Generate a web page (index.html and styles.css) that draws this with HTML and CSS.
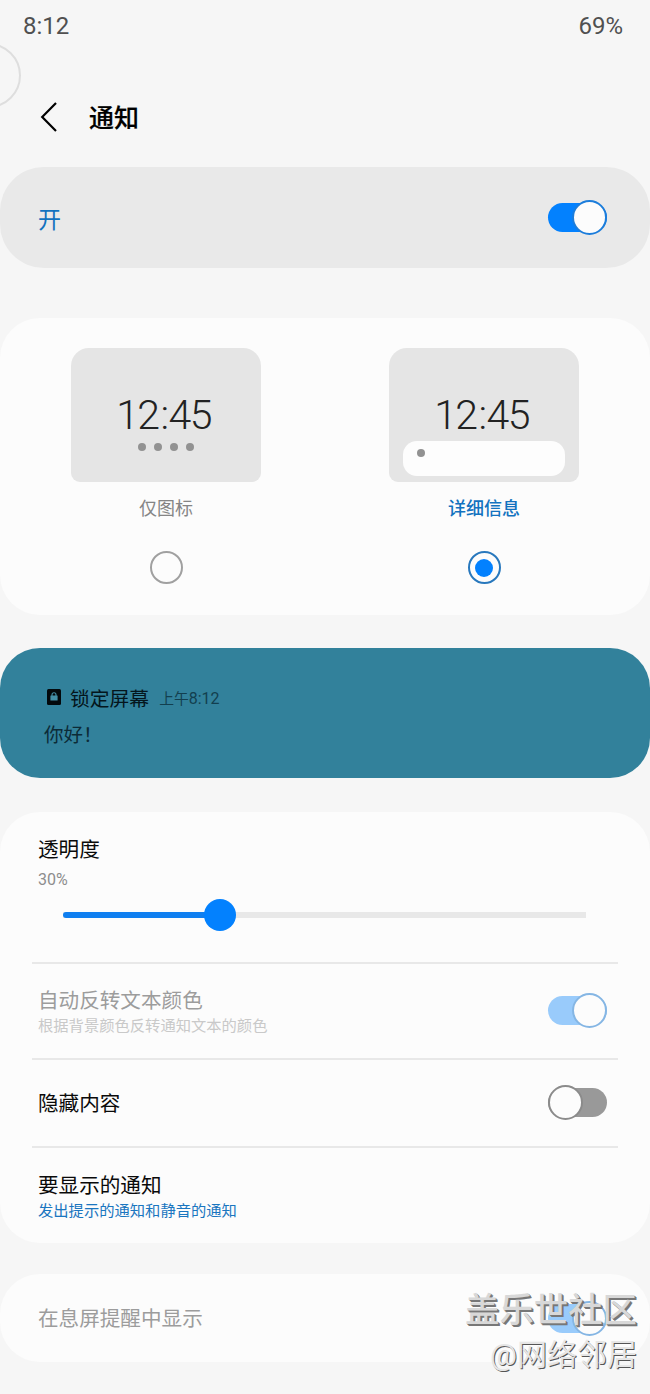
FILE: index.html
```html
<!DOCTYPE html>
<html lang="zh-CN">
<head>
  <meta charset="UTF-8" />
  <meta name="viewport" content="width=device-width, initial-scale=1.0"/>
  <title>通知</title>
  <link rel="stylesheet" href="styles.css">
</head>
<body>

  <div class="edge-handle"></div>

  <div class="status">
    <span>8:12</span>
    <span>69%</span>
  </div>

  <header>
    <svg class="back" width="18" height="32" viewBox="0 0 18 32" fill="none" stroke="#000" stroke-width="2.2">
      <path d="M16 2 L2.2 16 L16 30"/>
    </svg>
    <h1>通知</h1>
  </header>

  <main>
    <section class="card master">
      <span>开</span>
      <div class="switch on"></div>
    </section>

    <section class="card styles">
      <div class="option">
        <div class="thumb">
          <div class="clock">12<b>:</b>45</div>
          <div class="dots"><i></i><i></i><i></i><i></i></div>
        </div>
        <p>仅图标</p>
        <div class="radio"></div>
      </div>
      <div class="option selected">
        <div class="thumb">
          <div class="clock">12<b>:</b>45</div>
          <div class="bubble"><i></i></div>
        </div>
        <p>详细信息</p>
        <div class="radio"></div>
      </div>
    </section>

    <section class="card preview">
      <div class="preview-head">
        <svg width="14" height="16" viewBox="0 0 14 16">
          <rect width="14" height="16" rx="1.5" fill="#03090c"/>
          <rect x="3.4" y="6.6" width="7.2" height="5" rx="0.5" fill="#4390a8"/>
          <path d="M5 7.2 V5.8 a2 2 0 0 1 4 0 V7.2" fill="none" stroke="#4390a8" stroke-width="1.1"/>
        </svg>
        <span class="app">锁定屏幕</span>
        <span class="time">上午<span>8:12</span></span>
      </div>
      <p>你好！</p>
    </section>

    <section class="card settings">
      <div class="row opacity">
        <h2>透明度</h2>
        <p>30%</p>
        <div class="slider">
          <div class="fill" style="width:30%"></div>
          <div class="thumb-dot"></div>
        </div>
      </div>
      <div class="row invert disabled">
        <div>
          <h2>自动反转文本颜色</h2>
          <p>根据背景颜色反转通知文本的颜色</p>
        </div>
        <div class="switch on"></div>
      </div>
      <div class="row hide">
        <h2>隐藏内容</h2>
        <div class="switch"></div>
      </div>
      <div class="row show">
        <div>
          <h2>要显示的通知</h2>
          <p>发出提示的通知和静音的通知</p>
        </div>
      </div>
    </section>

    <section class="card aod disabled">
      <h2>在息屏提醒中显示</h2>
      <div class="switch on"></div>
    </section>
  </main>

  <div class="watermark">
    <strong>盖乐世社区</strong>
    <span>@网络邻居</span>
  </div>

</body>
</html>
```
FILE: styles.css
```css
*,*::after{margin:0;padding:0;box-sizing:border-box}
body{position:relative;height:1394px;overflow:hidden;font-family:Roboto,"Noto Sans CJK SC",sans-serif;background:#f6f6f6;color:#0a0a0a}
.edge-handle{position:absolute;left:-44px;top:43px;width:65px;height:65px;border:2px solid #dedede;border-radius:50%}
.status{display:flex;justify-content:space-between;height:52px;padding:0 27px 0 23px;line-height:52px;font-size:24px;color:#505050}
header{display:flex;align-items:center;height:115px;padding:15px 40px 0}
header h1{margin:4px 0 0 31px;font-size:25px;line-height:36px;font-weight:500;-webkit-text-stroke:0.2px #000;color:#000}
.card{background:#fcfcfc;border-radius:40px}
h2{font-size:20.6px;line-height:28px;font-weight:400}

.switch{position:relative;flex:none;width:59px;height:29px;border-radius:15px;background:#999}
.switch::after{content:"";position:absolute;left:0;top:-3px;width:35px;height:35px;border:2px solid #8b8b8b;border-radius:50%;background:#fcfcfc}
.switch.on{background:#0381fe}
.switch.on::after{left:auto;right:0;border-color:#1c7ddb}
.disabled .switch{background:#99cbfb}
.disabled .switch::after{border-color:#85b6e4}

.master{display:flex;align-items:center;justify-content:space-between;height:101px;margin-bottom:50px;padding:0 43px 0 38px;background:#e9e9e9;border-radius:44px;font-size:23px;color:#1272bf}

.styles{display:flex;justify-content:space-between;height:297px;margin-bottom:33px;padding:30px 71px 0}
.option{display:flex;flex-direction:column;align-items:center}
.thumb{display:flex;flex-direction:column;align-items:center;width:190px;height:134px;padding-top:42px;border-radius:18px 18px 9px 9px;background:#e5e5e5}
.clock{margin-right:5px;font-size:41px;line-height:50px;font-weight:300;letter-spacing:-1.6px;color:#222}
.clock b{margin:0 1px 0 2px;font-weight:300}
.thumb i{display:block;width:8px;height:8px;border-radius:50%;background:#929292}
.dots{display:flex;gap:8px;margin-top:3px}
.bubble{width:162px;height:35px;margin-top:1px;padding:8px 14px;border-radius:14px;background:#fdfdfd}
.option p{margin-top:14px;font-size:18px;line-height:26px;color:#858585}
.radio{width:33px;height:33px;margin-top:29px;border:2px solid #a0a0a0;border-radius:50%}
.selected p{font-weight:500;color:#1272bf}
.selected .radio{border-color:#2878bd;padding:5.5px}
.selected .radio::after{content:"";display:block;width:18px;height:18px;border-radius:50%;background:#0381fe}

.preview{height:130px;margin-bottom:34px;padding:34px 44px;background:#32819b;color:#0c2b37}
.preview-head{display:flex;align-items:center;height:30px;padding-left:3px}
.preview-head .app{margin-left:9px;font-size:19.8px;color:#04151c}
.preview-head .time{margin-left:10px;font-size:14.8px;color:#123f4f}
.preview-head .time span{font-size:16px}
.preview p{margin-top:10px;font-size:19.5px;line-height:28px}

.settings{height:431px;margin-bottom:31px;padding:0 32px}
.row{display:flex;align-items:center;justify-content:space-between;padding:0 11px 0 6px;border-bottom:2px solid #e8e8e8}
.row p{font-size:15.3px;line-height:22px}
.opacity{display:block;height:152px;padding-top:24px}
.row.opacity p{margin-top:5px;font-size:16px;color:#8d8d8d}
.slider{display:flex;align-items:center;width:523px;height:32px;margin:8px 0 0 25px;background:linear-gradient(#e8e8e8,#e8e8e8) center/100% 6px no-repeat}
.fill{height:6px;border-radius:3px;background:#0f7ff0}
.thumb-dot{width:32px;height:32px;margin-left:-16px;border-radius:50%;background:#0381fe}
.invert{height:96px}
.invert h2,.hide h2,.aod h2{padding-top:2px}
.invert .switch,.hide .switch{margin-bottom:2px}
.disabled h2{color:#9c9c9c}
.disabled p{color:#c9c9c9}
.hide{height:88px}
.show{height:95px;padding-top:2px;border:0}
.show p{color:#1a76c0}

.aod{display:flex;align-items:center;justify-content:space-between;height:88px;padding:0 43px 0 38px}

.watermark{position:absolute;right:13px;bottom:17px;display:flex;flex-direction:column;align-items:flex-end;color:#d8d8d8;text-shadow:1px 1px 0 #777,2px 2px 0 #777}
.watermark strong{font-size:34.4px;line-height:46px;font-weight:500}
.watermark span{font-size:30px;line-height:44px;color:#e6e6e6;text-shadow:1px 1px 0 #555}
```
